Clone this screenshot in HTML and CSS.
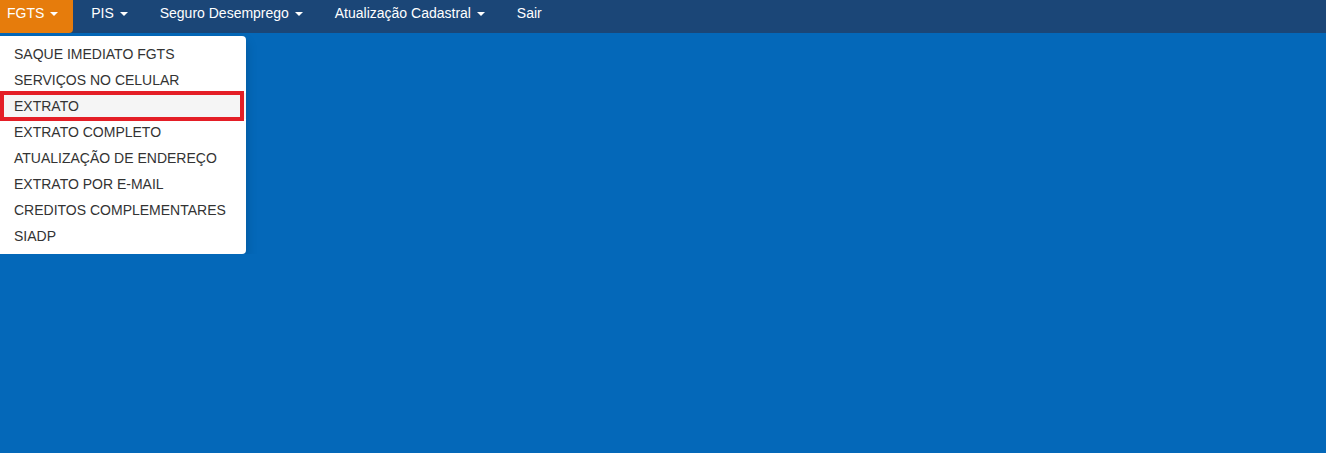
FILE: index.html
```html
<!DOCTYPE html>
<html lang="pt-BR">
<head>
    <meta charset="UTF-8">
    <title>FGTS</title>
    <link rel="stylesheet" href="styles.css">
</head>
<body>
    <nav class="navbar">
        <div class="nav">
            <span class="nav-item open">FGTS <span class="caret"></span></span>
            <span class="nav-item">PIS <span class="caret"></span></span>
            <span class="nav-item">Seguro Desemprego <span class="caret"></span></span>
            <span class="nav-item">Atualização Cadastral <span class="caret"></span></span>
            <span class="nav-item">Sair</span>
        </div>
    </nav>
    <!-- menu aberto do FGTS -->
    <div class="submenu">
        <div class="submenu-item">SAQUE IMEDIATO FGTS</div>
        <div class="submenu-item">SERVIÇOS NO CELULAR</div>
        <div class="submenu-item current">EXTRATO</div>
        <div class="submenu-item">EXTRATO COMPLETO</div>
        <div class="submenu-item">ATUALIZAÇÃO DE ENDEREÇO</div>
        <div class="submenu-item">EXTRATO POR E-MAIL</div>
        <div class="submenu-item">CREDITOS COMPLEMENTARES</div>
        <div class="submenu-item">SIADP</div>
    </div>
</body>
</html>
```

FILE: styles.css
```css
body {
    margin: 0;
    background: #0468b9;
    font-family: "Liberation Sans", Arial, sans-serif;
    font-size: 14px;
    line-height: 20px;
    color: #333;
}
.navbar {
    background: #1b4677;
    height: 33px;
}
.nav {
    display: flex;
}
.nav-item {
    color: #fff;
    padding: 3px 16px 10px;
}
.nav-item:first-child {
    padding: 3px 15px 10px 7px;
    margin-right: 2px;
}
.nav-item.open {
    background: #e67c0c;
    border-bottom-right-radius: 4px;
}
.caret {
    display: inline-block;
    width: 0;
    height: 0;
    margin-left: 2px;
    vertical-align: middle;
    border-top: 4px solid #fff;
    border-left: 4px solid transparent;
    border-right: 4px solid transparent;
}
.submenu {
    margin-top: 3px;
    width: 246px;
    padding: 5px 0;
    background: #fff;
    border-radius: 0 4px 4px 0;
    box-shadow: 0 6px 12px rgba(0, 0, 0, 0.175);
}
.submenu-item {
    position: relative;
    padding: 3px 14px;
    white-space: nowrap;
}
.submenu-item.current {
    background: #f5f5f5;
}
/* marcação vermelha em volta do item */
.submenu-item.current::after {
    content: "";
    position: absolute;
    left: 0;
    right: 2px;
    top: -2px;
    bottom: -2px;
    border: 4px solid #e41e26;
}
```
